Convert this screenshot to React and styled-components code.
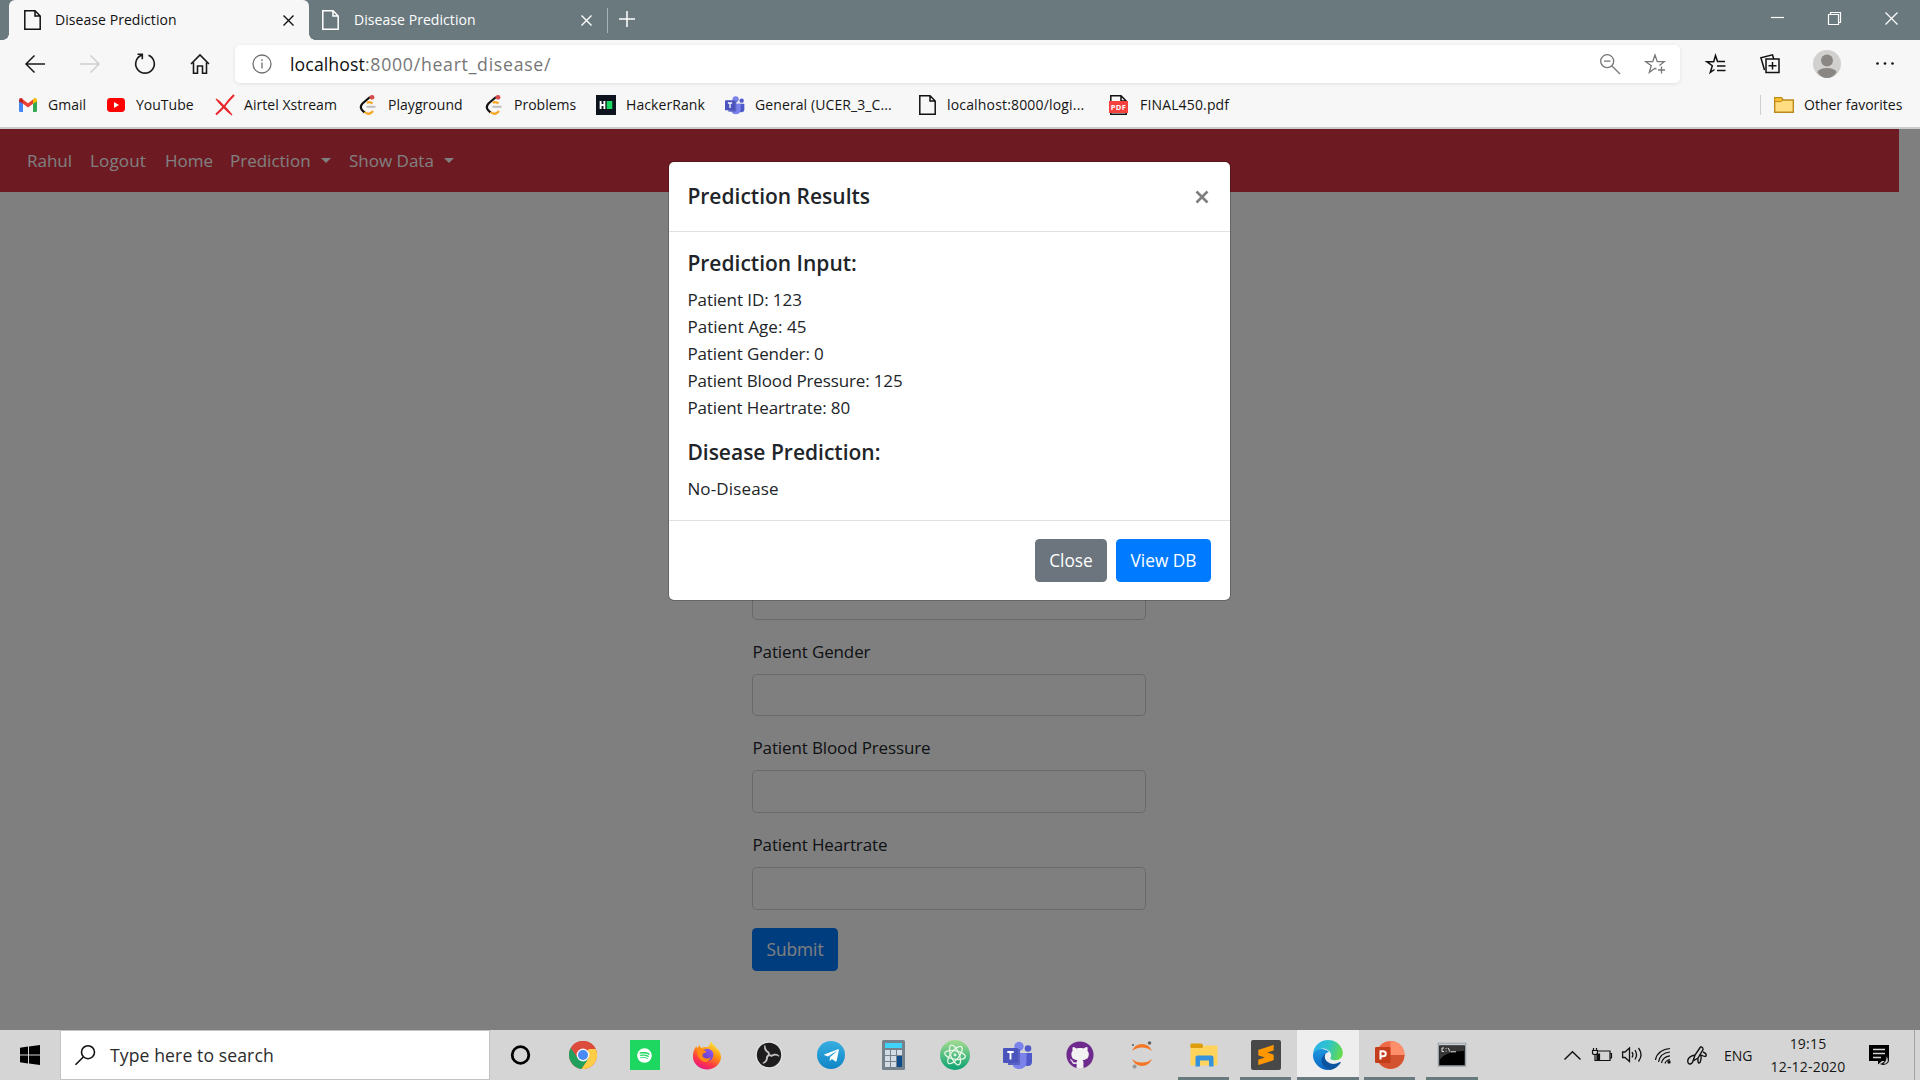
import React from "react";
import styled, { createGlobalStyle, css } from "styled-components";
import { FaSpotify, FaGithub, FaTelegramPlane } from "react-icons/fa";
import { SiSublimetext } from "react-icons/si";

const Global = createGlobalStyle`
  * { box-sizing: border-box; }
  body { margin: 0; background: #808080; overflow: hidden; font-family: "Segoe UI", "Open Sans", "Noto Sans", sans-serif; }
  svg { display: block; flex: none; overflow: visible; }
  h5, p { margin: 0; }
`;

const Screen = styled.div`
  width: 1920px;
  height: 1080px;
  display: flex;
  flex-direction: column;
  overflow: hidden;
`;

/* ---------- browser chrome ---------- */
const TabStrip = styled.div`
  height: 40px;
  background: #6a797e;
  display: flex;
  padding-left: 9px;
  color: #fff;
  flex: none;
`;
const Tab = styled.div`
  width: ${(p) => (p.$active ? 300 : 298)}px;
  height: 40px;
  padding: 0 15px 0 ${(p) => (p.$active ? 15 : 13)}px;
  display: flex;
  align-items: center;
  font-size: 14px;
  letter-spacing: 0.06px;
  position: relative;
  ${(p) =>
    p.$active &&
    css`
      background: #f7f7f7;
      color: #111;
      border-radius: 6px 6px 0 0;
      &::before, &::after {
        content: "";
        position: absolute;
        bottom: 0;
        width: 6px;
        height: 6px;
      }
      &::before { left: -6px; background: radial-gradient(circle at 0 0, transparent 5.5px, #f7f7f7 6px); }
      &::after { right: -6px; background: radial-gradient(circle at 100% 0, transparent 5.5px, #f7f7f7 6px); }
    `}
`;
const TabTitle = styled.span`
  flex: 1;
  margin-left: ${(p) => p.$ml || 14}px;
  padding-bottom: 2px;
  white-space: nowrap;
`;
const StripDivider = styled.div`
  width: 1px;
  height: 25px;
  margin-top: 8px;
  background: #a9b2b5;
`;
const NewTab = styled.div`
  padding: 11px 0 0 11px;
  flex: 1;
`;
const WindowControls = styled.div`
  display: flex;
  gap: 44px;
  padding: 12px 22px 0 0;
`;

const Toolbar = styled.div`
  height: 47px;
  background: #f7f7f7;
  display: flex;
  align-items: center;
  padding: 0 25px 0 25px;
  flex: none;
`;
const NavButtons = styled.div`
  width: 210px;
  display: flex;
  gap: 35px;
  align-items: center;
`;
const AddressBar = styled.div`
  width: 1445px;
  height: 38px;
  background: #fff;
  border-radius: 5px;
  box-shadow: 0 1px 4px rgba(0, 0, 0, 0.09);
  display: flex;
  align-items: center;
  padding: 0 15px 0 17px;
  margin-top: 1px;
  flex: none;
`;
const Url = styled.span`
  flex: 1;
  margin-left: 18px;
  font-size: 17.7px;
  line-height: 24px;
  color: #767676;
  letter-spacing: 0.72px;
`;
const UrlHost = styled.span`
  color: #111;
  letter-spacing: 0.1px;
`;
const AddressTools = styled.div`
  display: flex;
  gap: 25px;
`;
const ToolbarRight = styled.div`
  display: flex;
  align-items: center;
  justify-content: space-between;
  flex: 1;
  margin-left: 26px;
`;

const Bookmarks = styled.div`
  height: 42px;
  background: #f7f7f7;
  border-bottom: 2px solid #cbcdcd;
  display: flex;
  align-items: center;
  padding: 0 0 4px 19px;
  font-size: 14px;
  color: #151515;
  flex: none;
`;
const Bookmark = styled.div`
  width: ${(p) => p.$w}px;
  display: flex;
  align-items: center;
  white-space: nowrap;
  letter-spacing: ${(p) => p.$ls || 0}px;
  flex: none;
`;
const BookmarkIcon = styled.div`
  width: ${(p) => p.$w}px;
  flex: none;
`;
const BookmarkText = styled.span`
  padding-bottom: 2px;
`;
const OtherFavorites = styled.div`
  margin-left: auto;
  width: 160px;
  height: 20px;
  border-left: 1px solid #cfcfcf;
  padding-left: 13px;
  display: flex;
  align-items: center;
  gap: 10px;
  white-space: nowrap;
`;

/* ---------- web page ---------- */
const Page = styled.div`
  height: 901px;
  position: relative;
  background: #fff;
  flex: none;
`;
const PageBody = styled.div`
  width: 1899px;
`;
const Navbar = styled.nav`
  height: 63px;
  background: #dc3545;
  display: flex;
  align-items: center;
  padding: 0 0 1px 27px;
  color: #fff;
  font-size: 17px;
`;
const NavItem = styled.a`
  width: ${(p) => p.$w}px;
  display: flex;
  align-items: center;
  white-space: nowrap;
  letter-spacing: ${(p) => p.$ls || 0}px;
`;
const Caret = styled.span`
  margin-left: auto;
  margin-right: 18px;
  border: 5px solid transparent;
  border-top-color: #fff;
  border-bottom: 0;
`;
const Form = styled.form`
  width: 394px;
  margin: 0 0 0 752px;
  padding-top: 384.75px;
  color: #212529;
  font-size: 17px;
`;
const Field = styled.div`
  margin-bottom: 18px;
`;
const Label = styled.label`
  display: block;
  line-height: 27px;
  margin-bottom: 9px;
  padding-left: 0.5px;
  letter-spacing: -0.13px;
`;
const Input = styled.div`
  height: 42.75px;
  border: 1px solid #ced4da;
  border-radius: 4.5px;
`;
const Button = styled.button`
  width: ${(p) => p.$w}px;
  height: 43px;
  padding: 0;
  border: 0;
  border-radius: 4.5px;
  background: ${(p) => p.$bg};
  color: #fff;
  font: 17.3px "Segoe UI", "Open Sans", "Noto Sans", sans-serif;
`;
const Backdrop = styled.div`
  position: absolute;
  inset: 0;
  background: rgba(0, 0, 0, 0.5);
  padding: 33px 0 0 669px;
`;
const Modal = styled.div`
  width: 561px;
  height: 438px;
  background: #fff;
  border-radius: 5px;
  box-shadow: 0 0 0 1px rgba(0, 0, 0, 0.2);
  color: #212529;
  font-size: 17px;
`;
const ModalHeader = styled.div`
  height: 70px;
  border-bottom: 1px solid #dee2e6;
  padding: 0 22px 0 18.4px;
  display: flex;
  align-items: center;
  justify-content: space-between;
`;
const Heading = styled.h5`
  font-size: 21px;
  line-height: 27px;
  font-weight: 600;
  letter-spacing: 0;
`;
const ModalBody = styled.div`
  height: 288px;
  padding: 18.4px;
`;
const Section = styled.div`
  margin-bottom: 18px;
`;
const Line = styled.p`
  line-height: 27px;
  letter-spacing: ${(p) => p.$ls || 0}px;
`;
const Lines = styled.div`
  margin-top: 9px;
`;
const ModalFooter = styled.div`
  height: 80px;
  border-top: 1px solid #dee2e6;
  padding: 18px 19px 0 0;
  display: flex;
  justify-content: flex-end;
  gap: 9px;
`;

/* ---------- taskbar ---------- */
const Taskbar = styled.div`
  height: 50px;
  background: #d5d5d5;
  display: flex;
  flex: none;
`;
const Start = styled.div`
  width: 60px;
  padding: 15px 0 0 20px;
`;
const Search = styled.div`
  width: 430px;
  height: 50px;
  background: #fff;
  border: 1px solid #c3c3c3;
  display: flex;
  align-items: center;
  padding-left: 14px;
  gap: 15px;
  font-size: 17.6px;
  color: #2b2b2b;
  letter-spacing: 0.1px;
`;
const Apps = styled.div`
  display: flex;
  width: 1000px;
  margin-left: -0.5px;
`;
const AppSlot = styled.div`
  width: 62.13px;
  height: 50px;
  display: flex;
  align-items: center;
  justify-content: center;
  flex: none;
  background: ${(p) => (p.$active ? "#eee" : "transparent")};
  position: relative;
  &::after {
    content: "";
    position: absolute;
    bottom: 0;
    height: 3px;
    left: ${(p) => (p.$active ? 0 : 5)}px;
    right: ${(p) => (p.$active ? 0 : 6)}px;
    background: ${(p) => (p.$open ? "#687a7e" : "transparent")};
  }
`;
const Tile = styled.div`
  width: 30px;
  height: 30px;
  background: ${(p) => p.$bg};
  border-radius: ${(p) => p.$r || 0};
  display: flex;
  align-items: center;
  justify-content: center;
`;
const Round = styled(Tile)`
  width: 28px;
  height: 28px;
  border-radius: 50%;
`;
const Tray = styled.div`
  margin-left: auto;
  display: flex;
  align-items: center;
  color: #161616;
`;
const TrayIcon = styled.div`
  margin-left: ${(p) => p.$gap}px;
`;
const Lang = styled.span`
  width: 30px;
  margin-left: 17px;
  font-size: 14px;
`;
const Clock = styled.div`
  width: 90px;
  margin: 0 16px 0 9px;
  text-align: center;
  font-size: 14px;
  line-height: 23px;
  letter-spacing: 0.2px;
  white-space: nowrap;
`;
const ShowDesktop = styled.div`
  width: 6px;
  height: 50px;
  margin-left: 25px;
  border-left: 1px solid #a2a2a2;
`;

/* ---------- drawings ---------- */
const Svg = ({ w, h, vb, children, s, sw = 1.5 }) => (
  <svg width={w} height={h} viewBox={vb || `0 0 ${w} ${h}`} fill="none" stroke={s} strokeWidth={s ? sw : undefined}>
    {children}
  </svg>
);
const FileIcon = ({ c = "#111" }) => (
  <Svg w={17} h={20} s={c} sw={1.5}>
    <path d="M.8 .8H11L16.2 6V19.2H.8ZM11 .8V6H16.2" />
  </Svg>
);
const Cross = ({ n, c, sw = 1.4 }) => (
  <Svg w={n} h={n} s={c} sw={sw}>
    <path d={`M.5 .5L${n - 0.5} ${n - 0.5}M${n - 0.5} .5L.5 ${n - 0.5}`} />
  </Svg>
);

const Gmail = () => (
  <Svg w={18} h={14}>
    <path d="M0 2V12.8Q0 14 1.2 14H4V5.5Z" fill="#4285f4" />
    <path d="M18 2V12.8Q18 14 16.8 14H14V5.5Z" fill="#34a853" />
    <path d="M4 5.8V1.4L9 5.2L14 1.4V5.8L9 9.6Z" fill="#ea4335" />
    <path d="M0 2.2Q0 0 2 0Q3 0 4 1.4V5.8L0 3.5Z" fill="#c5221f" />
    <path d="M18 2.2Q18 0 16 0Q15 0 14 1.4V5.8L18 3.5Z" fill="#fbbc04" />
  </Svg>
);
const YouTube = () => (
  <Svg w={18} h={14}>
    <rect width="18" height="14" rx="3.4" fill="#f00" />
    <path d="M7 4V10L12 7Z" fill="#fff" />
  </Svg>
);
const Airtel = () => (
  <Svg w={20} h={20}>
    <path d="M1 4Q5 6 9 11Q14 16 17 20Q12 16 8.3 12Q4 8 1 4Z" fill="#e8262c" stroke="#e8262c" strokeWidth="1.2" />
    <path d="M19 0Q14 5 9.5 11Q5 16 1 19.5" stroke="#e8262c" strokeWidth="2" />
  </Svg>
);
const LeetCode = () => (
  <Svg w={18} h={20}>
    <path d="M11 2L3.5 8.5Q.5 12 3 15L5.5 17.5" stroke="#111" strokeWidth="2.2" />
    <path d="M8 8Q10.5 6 13.5 8.5M5.5 17Q10 21 14 16" stroke="#f5a623" strokeWidth="2.3" />
    <path d="M7.5 11.8H16.5" stroke="#bdbdbd" strokeWidth="2" />
    <circle cx="13" cy="2.3" r="2.4" fill="#d64c4c" />
  </Svg>
);
const HackerRank = () => (
  <Svg w={20} h={20}>
    <rect width="20" height="20" fill="#0e141e" />
    <path d="M4.6 6V14M8.4 6V14M4.6 10H8.4" stroke="#fff" strokeWidth="1.9" />
    <rect x="10.7" y="6" width="5.6" height="8" fill="#1bd65f" />
  </Svg>
);
const Teams = ({ w = 20 }) => (
  <Svg w={w} h={w} vb="0 0 30 30">
    <circle cx="25" cy="8.5" r="3.3" fill="#5059c9" />
    <path d="M19 13H29V21.5Q29 26 24.5 26Q20 26 19 22Z" fill="#5059c9" />
    <circle cx="16" cy="6.5" r="4.7" fill="#7b83eb" />
    <path d="M9 13H23.5V21Q23.5 29 16.2 29Q9 29 9 21Z" fill="#7b83eb" />
    <rect x="5" y="9" width="12" height="16" fill="#5a62c4" />
    <rect x="0" y="8" width="15" height="15" rx="1" fill="#4b53bc" />
    <path d="M4.3 12H10.7M7.5 12V19.5" stroke="#fff" strokeWidth="1.9" />
  </Svg>
);
const PdfLabel = styled.div`
  width: 19px;
  height: 12px;
  margin: -14px 0 2px -1px;
  background: #f6423f;
  color: #fff;
  font: 700 7.5px/12px "Open Sans", sans-serif;
  letter-spacing: 0.4px;
  text-align: center;
  position: relative;
`;
const Pdf = () => (
  <div>
    <FileIcon />
    <PdfLabel>PDF</PdfLabel>
  </div>
);
const Folder = () => (
  <Svg w={20} h={16}>
    <path d="M.7 15.3V.7H7.5L9 3H19.3V15.3Z" fill="#ffdd80" stroke="#bc8a1c" strokeWidth="1.4" />
    <path d="M.7 4.6H7L9 3L7.5 .7H.7Z" fill="#fbc02d" stroke="#bc8a1c" strokeWidth="1" />
  </Svg>
);
const Avatar = () => (
  <Svg w={28} h={28}>
    <circle cx="14" cy="14" r="14" fill="#d2d0ce" />
    <circle cx="14" cy="10.5" r="6" fill="#8a8683" />
    <path d="M4.3 22Q7 18 14 18Q21 18 23.7 22Q20 28 14 28Q8 28 4.3 22Z" fill="#8a8683" />
  </Svg>
);

const Chrome = () => (
  <Svg w={28} h={28} vb="-14 -14 28 28">
    <circle r="14" fill="#dc4b3e" />
    <path d="M0 0L-11.9 -7.4A14 14 0 0 0 -1.5 13.9L6 3.5Z" fill="#1fa15d" />
    <path d="M0 0L6.2 -6H12.7A14 14 0 0 1 -1.5 13.9L5.5 3.5Z" fill="#ffcd46" />
    <path d="M-12.1 -7A14 14 0 0 1 12.6 -6H0L-5.5 3Z" fill="#dc4b3e" />
    <circle r="6.4" fill="#f4f4f4" />
    <circle r="5" fill="#4a8af4" />
  </Svg>
);
const Firefox = () => (
  <Svg w={28} h={28}>
    <defs>
      <linearGradient id="ff" x1=".8" y1="0" x2=".3" y2="1">
        <stop offset="0" stopColor="#fff44f" />
        <stop offset=".4" stopColor="#ff980e" />
        <stop offset=".75" stopColor="#ff3647" />
        <stop offset="1" stopColor="#e31587" />
      </linearGradient>
      <linearGradient id="ffb" x1="1" y1="0" x2="0" y2="1">
        <stop offset="0" stopColor="#9059ff" />
        <stop offset="1" stopColor="#5b3ab5" />
      </linearGradient>
    </defs>
    <path d="M18 0Q19 3 22 5Q23 6 23.5 7.5L25 8Q28 12 28 16A14 13 0 0 1 0 15Q0 9 3.5 5L4 7.5L6.5 4L8 7Q11 5.5 15 6Q17.5 3.5 18 0Z" fill="url(#ff)" />
    <circle cx="14.2" cy="14" r="6.2" fill="url(#ffb)" />
    <path d="M4 8Q8 7 10 9L13.5 10Q13 12 10 12.5Q9 14.5 10 16Q14 19 18 16Q15 23 9 20Q4 17 4 8Z" fill="#ff8a16" />
  </Svg>
);
const Obs = () => (
  <Svg w={28} h={28} vb="-14 -14 28 28">
    <circle r="13.5" fill="#e4e4e4" />
    <circle r="12.2" fill="#1f1c1d" />
    {[0, 120, 240].map((a) => (
      <path
        key={a}
        transform={`rotate(${a})`}
        d="M0 0Q-.5 -2.5 -3 -4Q-5 -6 -4 -9.500Q-4.500 -6 -2 -4Q1 -2.500 0 0Z"
        fill="#c4c4c4"
        stroke="#c4c4c4"
        strokeWidth="1.1"
      />
    ))}
  </Svg>
);
const Calculator = () => (
  <Svg w={23} h={30}>
    <rect width="23" height="30" rx="1.5" fill="#75818b" />
    <rect x="3" y="3" width="17" height="5" fill="#3fd3fb" />
    {[0, 1, 2].map((r) => [0, 1, 2].map((c) => <rect key={`${r}${c}`} x={3 + c * 6} y={10 + r * 6} width="5" height="5" fill="#d3dce4" />))}
    <rect x="15" y="16" width="5" height="11" fill="#0f4a8a" />
  </Svg>
);
const Atom = () => (
  <Svg w={30} h={30} vb="-15 -15 30 30">
    <defs>
      <linearGradient id="at" x1="0" y1="0" x2="0" y2="1">
        <stop offset="0" stopColor="#a4dc92" />
        <stop offset="1" stopColor="#09a271" />
      </linearGradient>
    </defs>
    <circle r="15" fill="url(#at)" />
    <g stroke="#e6f6e4" strokeWidth="1.3">
      <ellipse rx="10.5" ry="4.2" transform="rotate(10)" />
      <ellipse rx="10.5" ry="4.2" transform="rotate(68)" />
      <ellipse rx="10.5" ry="4.2" transform="rotate(128)" />
    </g>
    <circle r="1.4" fill="#e6f6e4" />
  </Svg>
);
const Jupyter = () => (
  <Svg w={22} h={28}>
    <path d="M1 10Q4 3 11 3Q18 3 21 10Q17 6.5 11 6.5Q5 6.5 1 10ZM1 18Q4 25 11 25Q18 25 21 18Q17 21.5 11 21.5Q5 21.5 1 18Z" fill="#f37726" />
    <circle cx="18.5" cy="2" r="1.8" fill="#616262" />
    <circle cx="2" cy="4" r="1.1" fill="#616262" />
    <circle cx="3.6" cy="25.6" r="2" fill="#989798" />
  </Svg>
);
const Explorer = () => (
  <Svg w={28} h={24}>
    <path d="M.5 5V1.5Q.5 .5 1.5 .5H11Q12.5 .5 13 2V5Z" fill="#dd9c0c" />
    <path d="M.5 5H12L14.5 2.5H27.5V21.5Q27.5 22.5 26.5 22.5H1.5Q.5 22.5 .5 21.5Z" fill="#ffd35c" />
    <path d="M5.5 23.5V14.5Q5.5 12.5 7.5 12.5H21.5Q23.5 12.5 23.5 14.5V23.5H19V17.5H10V23.5Z" fill="#3592dc" />
  </Svg>
);
const Edge = () => (
  <Svg w={30} h={30}>
    <defs>
      <linearGradient id="ea" x1="0" y1=".3" x2="1" y2=".5">
        <stop offset="0" stopColor="#2bb2ec" />
        <stop offset=".5" stopColor="#2fc4c8" />
        <stop offset="1" stopColor="#66dc48" />
      </linearGradient>
      <linearGradient id="eb" x1="0" y1="0" x2="0" y2="1">
        <stop offset="0" stopColor="#1d96e0" />
        <stop offset="1" stopColor="#0a66c2" />
      </linearGradient>
    </defs>
    <path d="M0 14A15 15 0 0 1 15 0Q25 0 29 9Q31 15 28 18Q25 21 20 20Q17 19.5 17.5 17.5Q19 15 17 12Q13 7 7 9Q2 10.5 0 14Z" fill="url(#ea)" />
    <path d="M0 14Q3 8.5 9 9Q14 9.5 16 12Q12 12.5 11 17Q11 23 16.5 26L19 29.5Q10 31.5 4 25Q-.5 20 0 14Z" fill="url(#eb)" />
    <path d="M12.5 13.5Q10.5 18 14 21.5Q19 26 27 22Q28.5 21.5 27.5 23Q24 28.5 17.5 29.8Q9 28 8.5 21Q8.5 16 12.5 13.5Z" fill="#0d54a0" />
  </Svg>
);
const PowerPoint = () => (
  <Svg w={30} h={28}>
    <circle cx="15.5" cy="14" r="14" fill="#ed6c47" />
    <path d="M15.5 0A14 14 0 0 1 29.5 14H15.5Z" fill="#ff8f6b" />
    <path d="M29.5 14A14 14 0 0 1 3 20L15.5 14Z" fill="#d35230" />
    <rect x="0" y="6" width="15.5" height="16" rx="1.2" fill="#c43e1c" />
    <path d="M5.5 18.5V10.2H8Q10.8 10.2 10.8 12.7Q10.8 15.3 8 15.3H5.5" stroke="#fff" strokeWidth="2" />
  </Svg>
);
const Terminal = () => (
  <Svg w={28} h={24}>
    <rect x=".5" y=".5" width="27" height="22.5" fill="#000" stroke="#9aa0a8" strokeWidth="1.5" />
    <path d="M1 1.5H27" stroke="#c6ccd4" strokeWidth="1.8" />
    <path d="M1.5 3H26.5V8Q8 8 1.5 17Z" fill="#373737" />
    <path d="M6 5H4V8.5H6M8 5.2V6M8 7.7V8.5M10 4.8L12 8.7M13 8.8H18" stroke="#ddd" strokeWidth="1" />
  </Svg>
);

const BOOKMARKS = [
  { w: 88, iw: 29, icon: <Gmail />, text: "Gmail", ls: 0 },
  { w: 108, iw: 29, icon: <YouTube />, text: "YouTube", ls: 0 },
  { w: 144, iw: 29, icon: <Airtel />, text: "Airtel Xstream", ls: 0.05 },
  { w: 126, iw: 29, icon: <LeetCode />, text: "Playground", ls: 0.04 },
  { w: 111, iw: 29, icon: <LeetCode />, text: "Problems", ls: 0 },
  { w: 129, iw: 30, icon: <HackerRank />, text: "HackerRank", ls: 0.08 },
  { w: 194, iw: 30, icon: <Teams />, text: "General (UCER_3_C...", ls: 0.1 },
  { w: 191, iw: 28, icon: <FileIcon />, text: "localhost:8000/logi...", ls: 0.17 },
  { w: 130, iw: 30, icon: <Pdf />, text: "FINAL450.pdf", ls: 0.15 },
];

export default function App() {
  return (
    <Screen>
      <Global />
      <TabStrip>
        <Tab $active>
          <FileIcon />
          <TabTitle>Disease Prediction</TabTitle>
          <Cross n={11} c="#111" />
        </Tab>
        <Tab>
          <FileIcon c="#fff" />
          <TabTitle $ml={15}>Disease Prediction</TabTitle>
          <Cross n={11} c="#fff" />
        </Tab>
        <StripDivider />
        <NewTab>
          <Svg w={16} h={16} s="#fff"><path d="M8 0V16M0 8H16" /></Svg>
        </NewTab>
        <WindowControls>
          <Svg w={13} h={13} s="#fff" sw={1.2}><path d="M0 5.5H13" /></Svg>
          <Svg w={13} h={13} s="#fff" sw={1.2}><path d="M.5 2.5H10.5V12.5H.5ZM2.5 2.5V.5H12.5V10.5H10.5" /></Svg>
          <Cross n={13} c="#fff" sw={1.2} />
        </WindowControls>
      </TabStrip>

      <Toolbar>
        <NavButtons>
          <Svg w={20} h={18} s="#1b1b1b"><path d="M20 9H1M9.5 .5L1 9L9.5 17.5" /></Svg>
          <Svg w={20} h={18} s="#cfcfcf"><path d="M0 9H19M10.5 .5L19 9L10.5 17.5" /></Svg>
          <Svg w={20} h={21} s="#1b1b1b" sw={1.6}><path d="M13.5 2.2A9.3 9.3 0 1 1 6.5 2.2M2.5 1.2H7.3V6.2" /></Svg>
          <Svg w={20} h={20} s="#1b1b1b" sw={1.6}><path d="M1 10L10 1L19 10M3.5 8.5V19.2H7.5V12H12.5V19.2H16.5V8.5" /></Svg>
        </NavButtons>
        <AddressBar>
          <Svg w={20} h={20} s="#6f6f6f" sw={1.3}><circle cx="10" cy="10" r="9" /><path d="M10 8.5V14.5M10 5.2V7" /></Svg>
          <Url><UrlHost>localhost</UrlHost>:8000/heart_disease/</Url>
          <AddressTools>
            <Svg w={20} h={20} s="#767676" sw={1.3}><circle cx="7.2" cy="7.2" r="6.5" /><path d="M12 12L20 20M4 7.2H10.5" /></Svg>
            <Svg w={20} h={20} s="#767676" sw={1.3}><path d="M11.5 15.3L10 14.2L4.3 18.3L6.3 11.7L.8 7.7H7.7L10 1L12.3 7.7H19.2L14.5 11.5M16.5 12.5V19.5M13 16H20" /></Svg>
          </AddressTools>
        </AddressBar>
        <ToolbarRight>
          <Svg w={20} h={20} s="#111" sw={1.5}><path d="M8.5 15.5L4.3 18.5L6.3 11.7L.8 7.7H7.7L9.5 1.5L11.5 7.5H19M11 12H19.5M11 16.5H19.5" /></Svg>
          <Svg w={20} h={20} s="#111" sw={1.5}><path d="M6 5H19V18.5H6ZM12.5 8V15.5M8.5 11.8H16.5M4.5 16L.9 3.8L12.5 .8L13.6 4.5" /></Svg>
          <Avatar />
          <Svg w={20} h={4}><circle cx="2.5" cy="1.5" r="1.3" fill="#111" /><circle cx="10" cy="1.5" r="1.3" fill="#111" /><circle cx="17.5" cy="1.5" r="1.3" fill="#111" /></Svg>
        </ToolbarRight>
      </Toolbar>

      <Bookmarks>
        {BOOKMARKS.map((b) => (
          <Bookmark key={b.text} $w={b.w} $ls={b.ls}>
            <BookmarkIcon $w={b.iw}>{b.icon}</BookmarkIcon>
            <BookmarkText>{b.text}</BookmarkText>
          </Bookmark>
        ))}
        <OtherFavorites><Folder /><BookmarkText>Other favorites</BookmarkText></OtherFavorites>
      </Bookmarks>

      <Page>
        <PageBody>
          <Navbar>
            <NavItem $w={63}>Rahul</NavItem>
            <NavItem $w={75} $ls={0.15}>Logout</NavItem>
            <NavItem $w={65}>Home</NavItem>
            <NavItem $w={119}>Prediction<Caret /></NavItem>
            <NavItem $w={123}>Show Data<Caret /></NavItem>
          </Navbar>
          <Form>
            <Field><Input /></Field>
            <Field><Label>Patient Gender</Label><Input /></Field>
            <Field><Label>Patient Blood Pressure</Label><Input /></Field>
            <Field><Label>Patient Heartrate</Label><Input /></Field>
            <Button type="button" $w={86} $bg="#007bff">Submit</Button>
          </Form>
        </PageBody>
        <Backdrop>
          <Modal>
            <ModalHeader>
              <Heading>Prediction Results</Heading>
              <Cross n={12} c="#7f7f7f" sw={2.6} />
            </ModalHeader>
            <ModalBody>
              <Section>
                <Heading>Prediction Input:</Heading>
                <Lines>
                  <Line $ls={-0.08}>Patient ID: 123</Line>
                  <Line $ls={0.05}>Patient Age: 45</Line>
                  <Line $ls={-0.12}>Patient Gender: 0</Line>
                  <Line $ls={-0.14}>Patient Blood Pressure: 125</Line>
                  <Line $ls={-0.13}>Patient Heartrate: 80</Line>
                </Lines>
              </Section>
              <Heading>Disease Prediction:</Heading>
              <Lines><Line $ls={0.15}>No-Disease</Line></Lines>
            </ModalBody>
            <ModalFooter>
              <Button type="button" $w={72} $bg="#6c757d">Close</Button>
              <Button type="button" $w={95} $bg="#007bff">View DB</Button>
            </ModalFooter>
          </Modal>
        </Backdrop>
      </Page>

      <Taskbar>
        <Start>
          <Svg w={20} h={20}><path d="M0 2.8L8 1.6V9.5H0ZM9 1.5L20 0V9.5H9ZM0 10.5H8V18.5L0 17.3ZM9 10.5H20V20L9 18.6Z" fill="#000" /></Svg>
        </Start>
        <Search>
          <Svg w={20} h={20} s="#111" sw={1.6}><circle cx="13" cy="7.2" r="6.5" /><path d="M8.3 12L.5 19.7" /></Svg>
          Type here to search
        </Search>
        <Apps>
          <AppSlot><Svg w={20} h={20} s="#000" sw={2.8}><circle cx="9.5" cy="10" r="8.3" /></Svg></AppSlot>
          <AppSlot><Chrome /></AppSlot>
          <AppSlot><Tile $bg="#1ed760"><FaSpotify size={15} color="#fff" /></Tile></AppSlot>
          <AppSlot><Firefox /></AppSlot>
          <AppSlot><Obs /></AppSlot>
          <AppSlot><Round $bg="linear-gradient(#37aee2, #0f85c5)"><FaTelegramPlane size={17} color="#fff" /></Round></AppSlot>
          <AppSlot><Calculator /></AppSlot>
          <AppSlot><Atom /></AppSlot>
          <AppSlot><Teams w={30} /></AppSlot>
          <AppSlot><Tile $bg="radial-gradient(circle, #f2f2f2 60%, transparent 62%)" $r="50%"><FaGithub size={28} color="#6e2a8c" /></Tile></AppSlot>
          <AppSlot><Jupyter /></AppSlot>
          <AppSlot $open><Explorer /></AppSlot>
          <AppSlot $open><Tile $bg="#484848" $r="2px"><SiSublimetext size={20} color="#ff9800" /></Tile></AppSlot>
          <AppSlot $open $active><Edge /></AppSlot>
          <AppSlot $open><PowerPoint /></AppSlot>
          <AppSlot $open><Terminal /></AppSlot>
        </Apps>
        <Tray>
          <Svg w={17} h={9} s="#111" sw={1.4}><path d="M.5 8.5L8.5 .7L16.5 8.5" /></Svg>
          <TrayIcon $gap={11}>
            <Svg w={20} h={14} s="#111" sw={1.2}>
              <path d="M6 3H18V12.5H5.5V9M18 5.5H19.5V10H18M1.5 0V2.5M4.5 0V2.5M.5 2.5H5.5V5Q5.5 6.5 3 6.5Q.5 6.5 .5 5ZM3 6.5V12.5H6" />
              <path d="M5 6H7.5V12H5Z" fill="#111" />
            </Svg>
          </TrayIcon>
          <TrayIcon $gap={10}>
            <Svg w={21} h={18} s="#111" sw={1.3}>
              <path d="M.6 6H3L7.5 2V15.5L3 11.5H.6ZM10 6Q11.8 8.7 10 11.5M13 4Q16 8.7 13 13.5M16.5 2Q21.5 8.7 16.5 15.5" />
            </Svg>
          </TrayIcon>
          <TrayIcon $gap={12}>
            <Svg w={16} h={17} s="#111" sw={1.2}>
              <path d="M.5 13Q2 3 15 1.5M3.5 15Q5 6 15 5M6.5 16Q8 9.5 15 8.8M10 16.5Q11 13 15 12.5" />
              <circle cx="14" cy="15" r="1.7" fill="#111" stroke="none" />
            </Svg>
          </TrayIcon>
          <TrayIcon $gap={16}>
            <Svg w={20} h={19} s="#111" sw={1.4}>
              <path d="M6 15L8 9L13.5 1Q16 .5 16 3.5L11 12ZM8 9Q1 10.5 .7 15Q1 18.5 3.5 18Q6 17 6 15M11 12Q10.5 18.5 13 16.5Q15 12 13.5 8.5M16 6Q20 7.5 19 10Q17 11 14.5 9" />
            </Svg>
          </TrayIcon>
          <Lang>ENG</Lang>
          <Clock>19:15<br />12-12-2020</Clock>
          <Svg w={20} h={20}>
            <path d="M0 0H20V16H13L9 19.5V16H0Z" fill="#000" />
            <path d="M4 4.5H16M4 8.5H16M4 12.5H12" stroke="#d5d5d5" strokeWidth="1.3" />
            <path d="M17 10.5Q20.5 13 19 17Q16.5 20.5 12.5 19Q17.5 17 17 10.5Z" fill="#d5d5d5" stroke="#111" strokeWidth="1.2" />
          </Svg>
          <ShowDesktop />
        </Tray>
      </Taskbar>
    </Screen>
  );
}
